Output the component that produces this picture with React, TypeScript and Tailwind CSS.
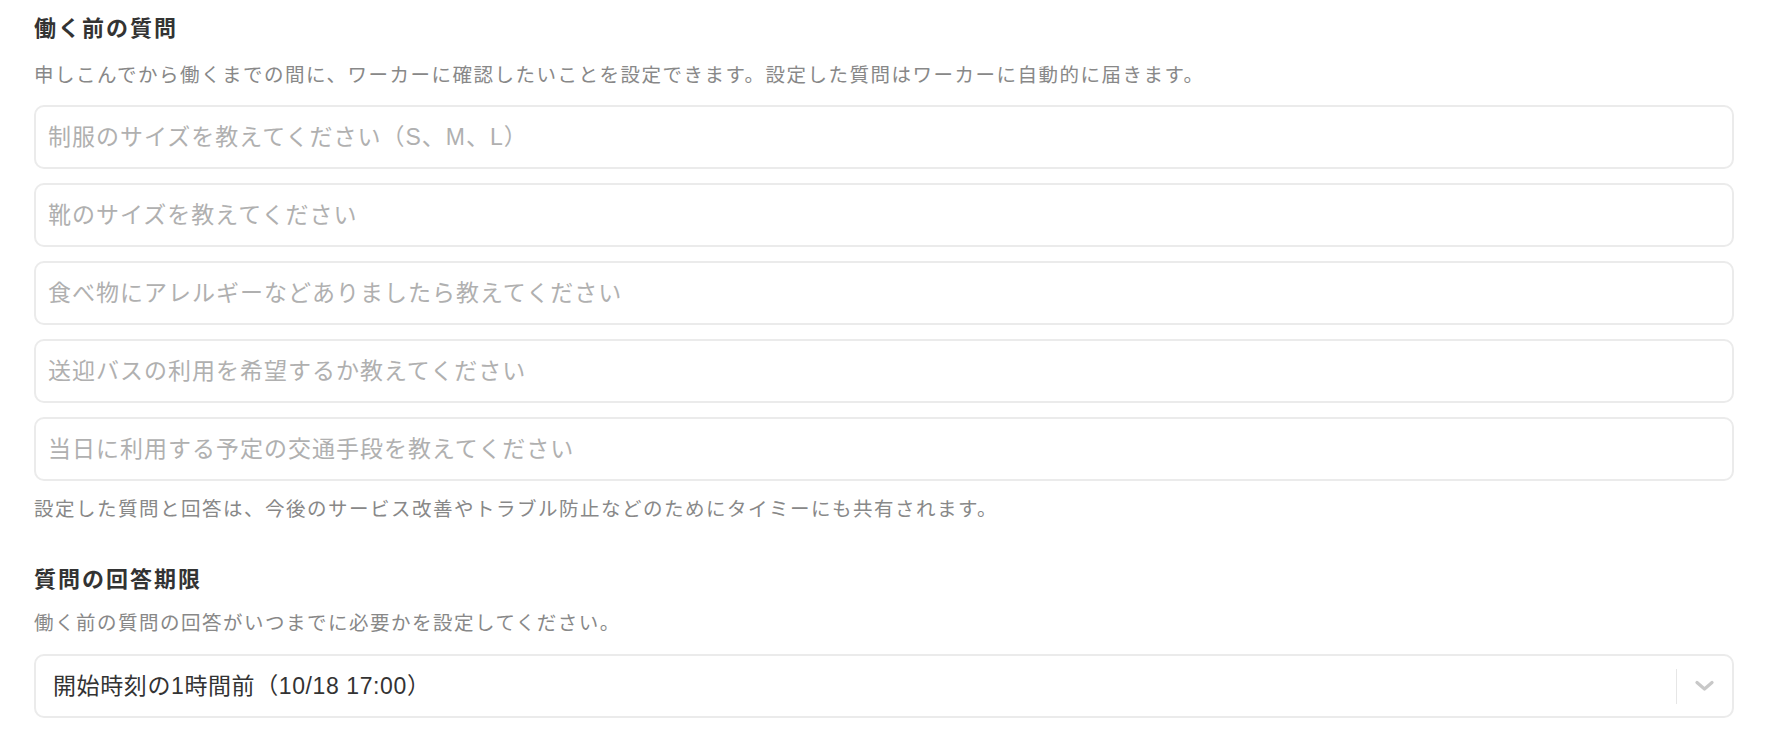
import React from "react";

const font = {
  fontFamily: '"Liberation Sans", "Noto Sans CJK JP", sans-serif',
};

const questions = [
  "制服のサイズを教えてください（S、M、L）",
  "靴のサイズを教えてください",
  "食べ物にアレルギーなどありましたら教えてください",
  "送迎バスの利用を希望するか教えてください",
  "当日に利用する予定の交通手段を教えてください",
];

export default function App() {
  return (
    <div
      className="w-full min-h-[750px] bg-white pl-[34px] pr-[32px] pt-[15px]"
      style={font}
    >
      <h2 className="text-[22px] leading-[28px] font-bold tracking-[2px] text-[#333333]">
        働く前の質問
      </h2>
      <p className="mt-[18px] text-[19.5px] leading-[28px] tracking-[1.5px] text-[#888888]">
        申しこんでから働くまでの間に、ワーカーに確認したいことを設定できます。設定した質問はワーカーに自動的に届きます。
      </p>
      <div className="mt-[16px] flex flex-col gap-[14px]">
        {questions.map((q) => (
          <input
            key={q}
            type="text"
            placeholder={q}
            className="h-[64px] w-full rounded-[10px] border-2 border-[#ebebeb] bg-white px-[12px] text-[23px] tracking-[1px] text-[#333333] outline-none placeholder:text-[#b0b0b0]"
          />
        ))}
      </div>
      <p className="mt-[14px] text-[19.5px] leading-[28px] tracking-[1.5px] text-[#888888]">
        設定した質問と回答は、今後のサービス改善やトラブル防止などのためにタイミーにも共有されます。
      </p>
      <h2 className="mt-[43px] text-[22px] leading-[28px] font-bold tracking-[2px] text-[#333333]">
        質問の回答期限
      </h2>
      <p className="mt-[15px] text-[19.5px] leading-[28px] tracking-[1.5px] text-[#888888]">
        働く前の質問の回答がいつまでに必要かを設定してください。
      </p>
      <div className="mt-[17px] flex h-[64px] w-full items-center rounded-[10px] border-2 border-[#ebebeb] bg-white">
        <div className="flex-1 pl-[17px] text-[23px] tracking-[0.6px] text-[#333333]">
          開始時刻の1時間前（10/18 17:00）
        </div>
        <div className="h-[35px] w-px bg-[#e6e6e6]" />
        <div className="flex h-full w-[55px] items-center justify-center">
          <svg width="19" height="12" viewBox="0 0 19 12" fill="none">
            <polyline
              points="2,2.5 9.5,9 17,2.5"
              stroke="#c8c8c8"
              strokeWidth="3.2"
              strokeLinecap="round"
              strokeLinejoin="round"
            />
          </svg>
        </div>
      </div>
    </div>
  );
}
